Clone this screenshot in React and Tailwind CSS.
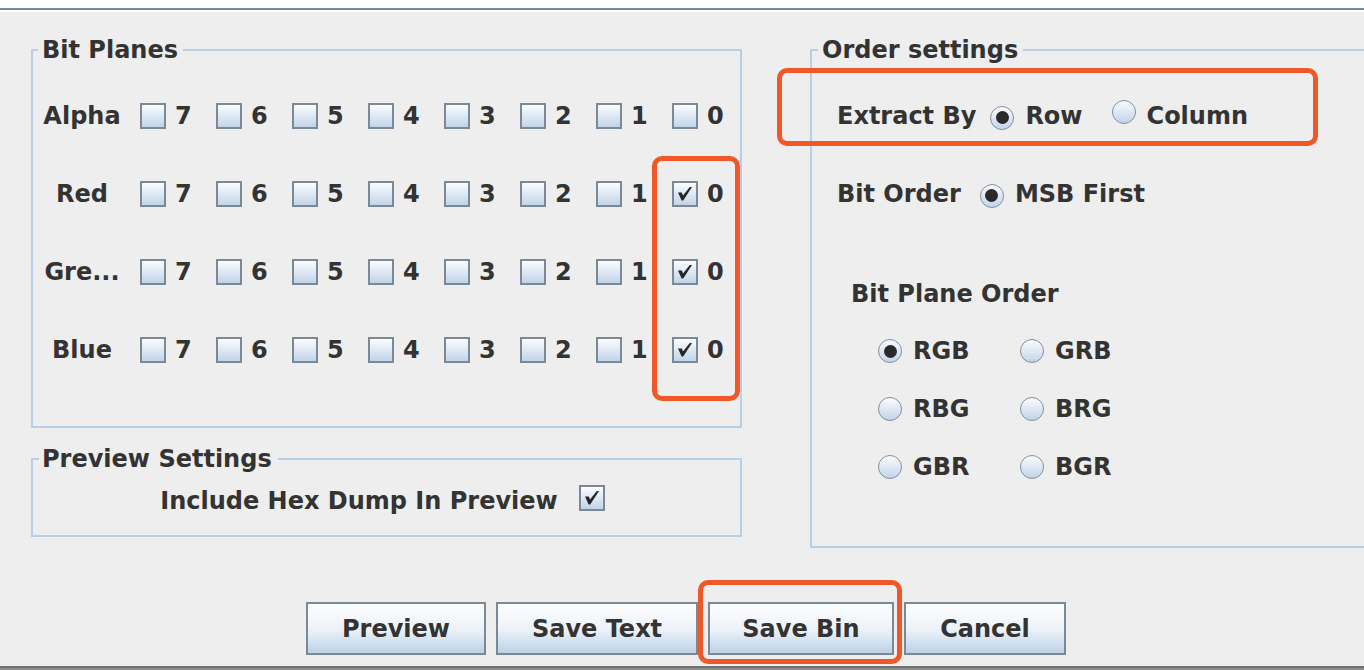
import React from "react";

const bits = [7, 6, 5, 4, 3, 2, 1, 0];

const planes = [
  { label: "Alpha", checked: [] },
  { label: "Red", checked: [0] },
  { label: "Gre...", checked: [0] },
  { label: "Blue", checked: [0] },
];

function Check({ checked }) {
  return (
    <span className="inline-flex w-[26px] h-[26px] shrink-0 items-center justify-center border-2 border-[#7b8896] bg-linear-to-b from-[#fbfcfe] to-[#c2d4e9]">
      {checked && (
        <svg width="22" height="22" viewBox="0 0 22 22">
          <polygon points="4,9.5 7.8,9.5 9,12.5 15.8,4 18,4 9.2,17.5 7.6,17.5" fill="#262626" />
        </svg>
      )}
    </span>
  );
}

function Radio({ checked }) {
  return (
    <span className="inline-flex w-[24px] h-[24px] shrink-0 items-center justify-center rounded-full border-[1.5px] border-[#7f8fa1] bg-linear-to-b from-[#fbfcfe] to-[#c2d4e9]">
      {checked && <span className="w-[13px] h-[13px] rounded-full bg-[#2a2a2a]" />}
    </span>
  );
}

function Group({ title, legendClass, className, children }) {
  return (
    <fieldset className={"min-w-0 border-2 border-[#b9cfe5] px-0 m-0 " + className}>
      <legend className={"leading-[28px] " + legendClass}>{title}</legend>
      {children}
    </fieldset>
  );
}

function Button({ w, children }) {
  return (
    <button className={"h-[53px] border-2 border-[#7b8896] bg-linear-to-b from-[#fdfdfe] via-[#eef3f9] to-[#bdd1e7] text-[#333] " + w}>
      {children}
    </button>
  );
}

export default function App() {
  return (
    <div className="relative w-[1364px] h-[670px] overflow-hidden flex flex-col bg-[#eeeeee] font-['DejaVu_Sans',sans-serif] font-bold text-[24px] text-[#333333]">
      <div className="h-[8px] bg-white" />
      <div className="h-[2px] bg-[#7b8896]" />
      <div className="h-[2px] bg-white" />

      <div className="flex pt-[24px] pl-[31px] gap-[68px]">
        <div className="w-[711px] shrink-0 flex flex-col">
          <Group title="Bit Planes" legendClass="ml-[5px] pl-[4px] pr-[5px]" className="pb-[37px]">
            <div className="pt-[13px] pl-[10px]">
              {planes.map((p) => (
                <div key={p.label} className="h-[78px] flex items-center">
                  <span className="w-[78px] text-center whitespace-nowrap">{p.label}</span>
                  <div className="ml-[19px] flex">
                    {bits.map((b) => (
                      <div key={b} className={"flex items-center " + (b === 0 ? "" : "w-[76px]")}>
                        <Check checked={p.checked.includes(b)} />
                        <span className="ml-[9px]">{b}</span>
                      </div>
                    ))}
                  </div>
                </div>
              ))}
            </div>
          </Group>

          <Group title="Preview Settings" legendClass="ml-[6px] pl-[3px] pr-[6px]" className="mt-[17px] pb-[6px]">
            <div className="h-[56px] flex items-center justify-center pr-[8px]">
              <span>Include Hex Dump In Preview</span>
              <span className="ml-[21px]"><Check checked /></span>
            </div>
          </Group>
        </div>

        <Group title="Order settings" legendClass="ml-[6px] pl-[4px] pr-[5px]" className="w-[600px] shrink-0 pb-[50px]">
          <div className="pt-[13px]">
            <div className="h-[78px] flex items-center pl-[25px]">
              <span>Extract By</span>
              <span className="ml-[14px]"><Radio checked /></span>
              <span className="ml-[11px]">Row</span>
              <span className="ml-[29px]"><Radio /></span>
              <span className="ml-[11px]">Column</span>
            </div>
            <div className="h-[78px] flex items-center pl-[25px]">
              <span>Bit Order</span>
              <span className="ml-[19px]"><Radio checked /></span>
              <span className="ml-[11px]">MSB First</span>
            </div>
            <div className="mt-[41px] h-[40px] flex items-center pl-[39px]">Bit Plane Order</div>
            <div className="mt-[8px] pl-[66px] grid grid-cols-[142px_142px]">
              {["RGB", "GRB", "RBG", "BRG", "GBR", "BGR"].map((o) => (
                <div key={o} className="h-[58px] flex items-center">
                  <Radio checked={o === "RGB"} />
                  <span className="ml-[11px]">{o}</span>
                </div>
              ))}
            </div>
          </div>
        </Group>
      </div>

      <div className="mt-[54px] flex justify-center gap-[10px] pl-[8px]">
        <Button w="w-[180px]">Preview</Button>
        <Button w="w-[202px]">Save Text</Button>
        <Button w="w-[186px]">Save Bin</Button>
        <Button w="w-[162px]">Cancel</Button>
      </div>

      <div className="mt-auto h-[2px] bg-[#717171]" />
      <div className="h-[2px] bg-[#8d8d8d]" />

      <div className="absolute left-[652px] top-[156px] w-[88px] h-[245px] rounded-[10px] border-[5px] border-[#f0582a] pointer-events-none" />
      <div className="absolute left-[777px] top-[68px] w-[541px] h-[78px] rounded-[10px] border-[5px] border-[#f0582a] pointer-events-none" />
      <div className="absolute left-[698px] top-[580px] w-[204px] h-[84px] rounded-[10px] border-[5px] border-[#f0582a] pointer-events-none" />
    </div>
  );
}
